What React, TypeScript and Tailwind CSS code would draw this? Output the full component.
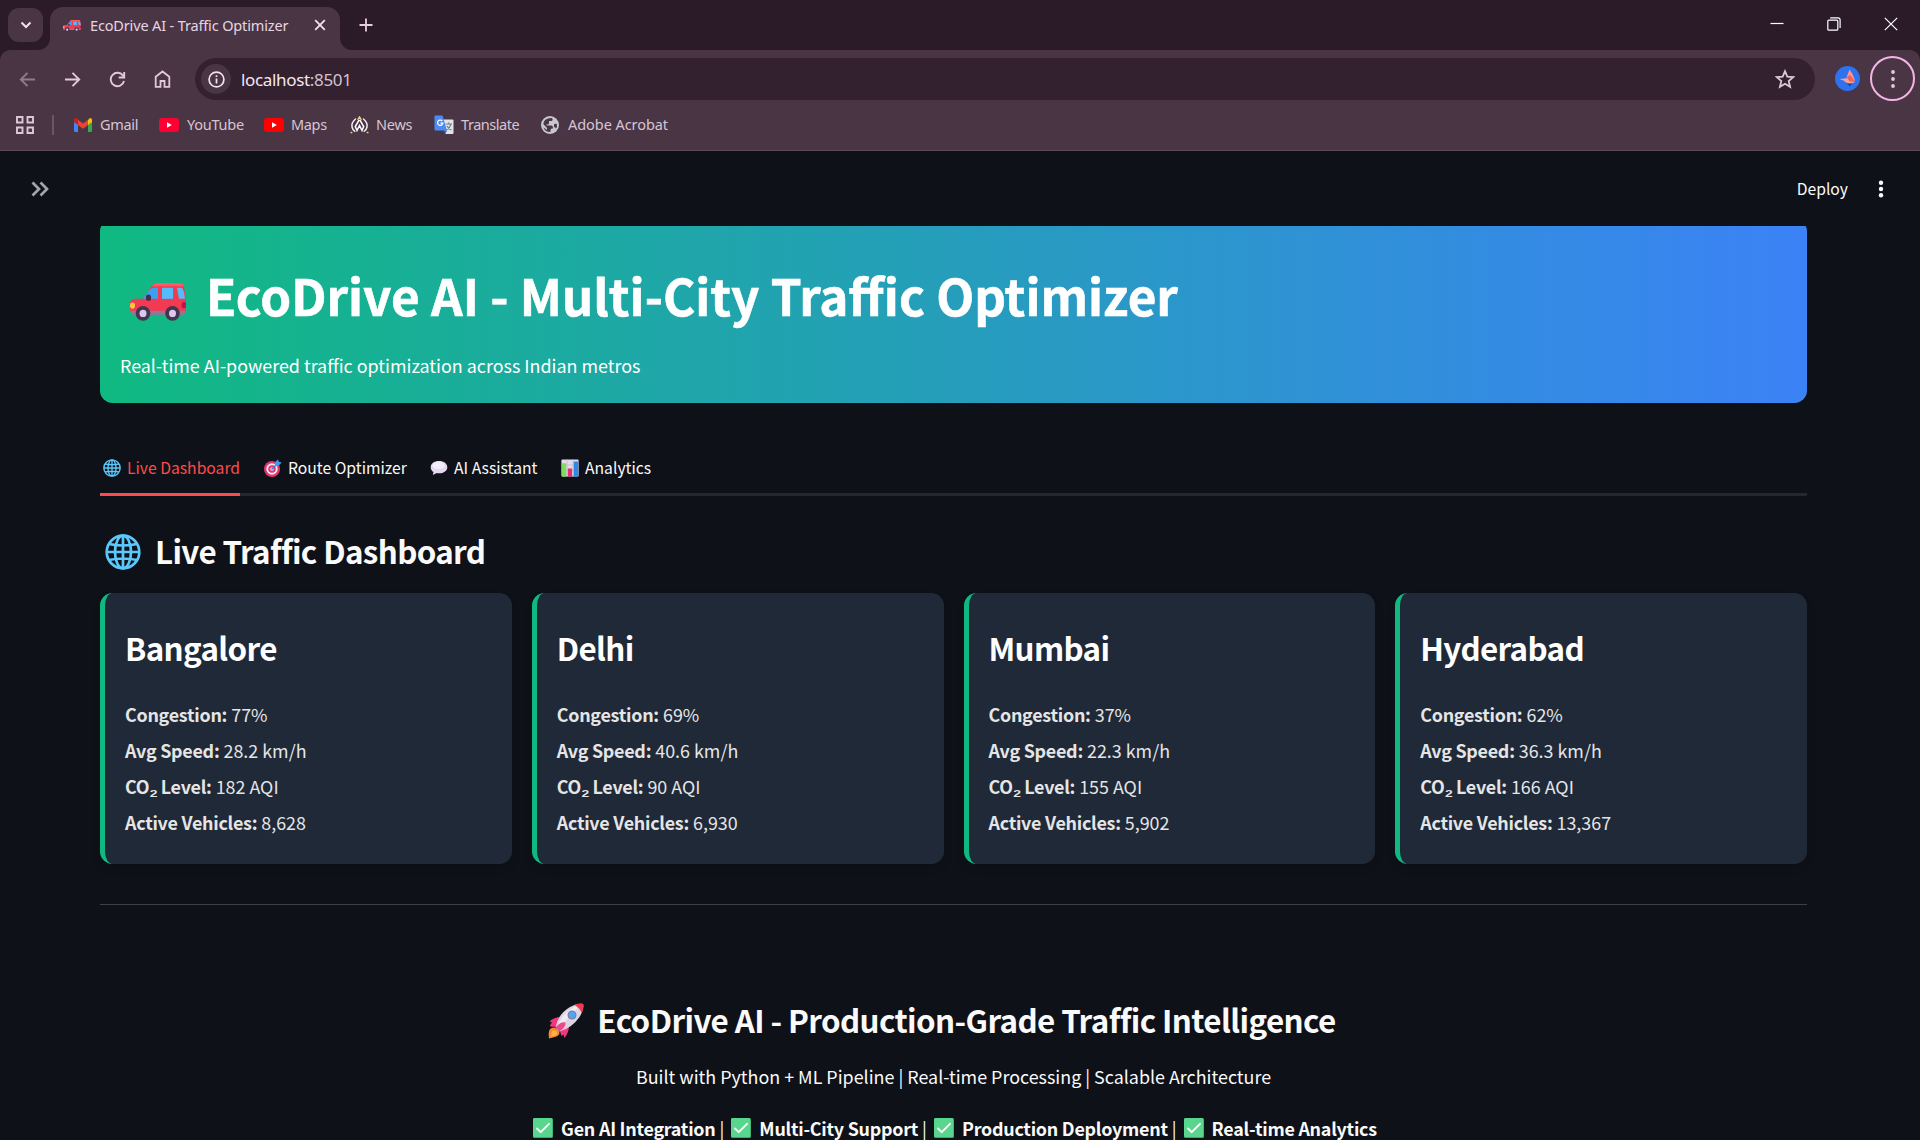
import React from "react";

const CITIES = [
  { name: "Bangalore", congestion: "77%", speed: "28.2 km/h", co2: "182 AQI", vehicles: "8,628" },
  { name: "Delhi", congestion: "69%", speed: "40.6 km/h", co2: "90 AQI", vehicles: "6,930" },
  { name: "Mumbai", congestion: "37%", speed: "22.3 km/h", co2: "155 AQI", vehicles: "5,902" },
  { name: "Hyderabad", congestion: "62%", speed: "36.3 km/h", co2: "166 AQI", vehicles: "13,367" },
];

function Car({ className }: { className?: string }) {
  return (
    <svg viewBox="0 0 56 48" preserveAspectRatio="none" className={className} fill="none">
      <path d="M13 20 22 3Q24 1 27 1H49Q53 1 54 5L56 20V36H1Q0 36 0 33V25Q0 21 5 20Z" fill="#f23a52" />
      <path d="M22 3Q24 0 27 0H49Q53 0 54 4H22Z" fill="#ff5a62" />
      <path d="M13 20 20 8Q21 6 24 6H28V20Z" fill="#3aa0f0" />
      <path d="M32 6H43V20H32Z" fill="#54bcfa" />
      <path d="M47 6H51Q53 6 54 12L55 20H49Z" fill="#54bcfa" />
      <path d="M1 35H55V38Q55 40 53 40H3Q1 40 1 38Z" fill="#9c7392" />
      <ellipse cx="2.5" cy="28.500" rx="2.500" ry="4" fill="#ffc93c" />
      <ellipse cx="54" cy="28" rx="2.500" ry="4" fill="#c3124f" />
      <ellipse cx="18.500" cy="18.500" rx="2.600" ry="4" fill="#3c2f52" />
      <ellipse cx="13" cy="38.500" rx="7.300" ry="9.300" fill="#41364d" />
      <ellipse cx="13" cy="38.500" rx="3.500" ry="4.600" fill="#dcc7ee" />
      <ellipse cx="42.500" cy="38.500" rx="7.300" ry="9.300" fill="#41364d" />
      <ellipse cx="42.500" cy="38.500" rx="3.500" ry="4.600" fill="#dcc7ee" />
    </svg>
  );
}

function GlobeEmoji({ className }: { className?: string }) {
  return (
    <svg viewBox="0 0 36 36" className={className} fill="none" stroke="#5ac8fb" strokeWidth="2.700">
      <circle cx="18" cy="18" r="16.300" />
      <ellipse cx="18" cy="18" rx="8" ry="16.300" />
      <path d="M18 1.500V34.500M1.500 18H34.500M4 10Q18 13 32 10M4 26Q18 23 32 26" />
    </svg>
  );
}

function Target({ className }: { className?: string }) {
  return (
    <svg viewBox="0 0 18 18" className={className}>
      <circle cx="8" cy="10" r="8" fill="#e1356f" />
      <circle cx="8" cy="10" r="5.700" fill="#f3e4f2" />
      <circle cx="8" cy="10" r="3.800" fill="#e1356f" />
      <circle cx="8" cy="10" r="1.800" fill="#f3e4f2" />
      <path d="M7.500 10.500 12 6" stroke="#2c7fd0" strokeWidth="1.500" />
      <path d="M11 6.800V3.500L14 .3 14.800 2.800 17.700 3.600 14.500 6.800Z" fill="#3aa0ee" />
    </svg>
  );
}

function Bubble({ className }: { className?: string }) {
  return (
    <svg viewBox="0 0 18 16" className={className}>
      <path d="M9 1C4 1 .7 3.700 .7 7.200c0 2.100 1.100 3.700 2.800 4.800L2.800 15l4-1.900c.7.100 1.400.2 2.200.2 5 0 8.300-2.600 8.300-6.100S14 1 9 1Z" fill="#e4d9ee" />
      <ellipse cx="8.500" cy="5.500" rx="6" ry="3.400" fill="#f3edf8" />
    </svg>
  );
}

function BarChart({ className }: { className?: string }) {
  return (
    <svg viewBox="0 0 18 18" className={className}>
      <rect x=".4" y=".4" width="17.200" height="17.200" rx="1" fill="#e5dcea" />
      <path d="M.4 6H17.600M.4 11.500H17.600M6 .4V17.600M12 .4V17.600" stroke="#c3b6cc" strokeWidth=".7" />
      <rect x="1" y="4.300" width="4.300" height="13.300" fill="#7ddb5e" />
      <rect x="6.800" y="9.500" width="4.300" height="8.100" fill="#e0306e" />
      <rect x="12.700" y="2.500" width="4.500" height="15.100" fill="#2f8ae6" />
    </svg>
  );
}

function Rocket({ className }: { className?: string }) {
  return (
    <svg viewBox="0 0 36 36" className={className}>
      <path d="M2 26Q6 22 11 28Q13 32 7 34L1 35.500Q0 29 2 26Z" fill="#f58a2e" />
      <path d="M4 28Q7 26 9 29Q10 32 6 33L3 33.500Z" fill="#ffb04a" />
      <path d="M13 14Q6 14 1.500 18.500L4 19.500Q2 21 2 23.500L9 24Z" fill="#f2387c" />
      <path d="M21 23Q21 29 16.500 35L15.500 31.500 13.500 33 11.500 27Z" fill="#f2387c" />
      <path d="M7.500 24.500Q10 11 22 4Q29 0 35 1Q36 7 31.500 14Q24 25 11.500 28.500Z" fill="#dcd5e4" />
      <path d="M9 25Q13 12 24 5Q29 2 33 2Q25 9 10 27Z" fill="#eee9f3" />
      <path d="M26.500 2Q31 0 34.500.8Q36 1 35.700 3Q35.500 7 33.500 10Q32 5 26.500 2Z" fill="#f03a4f" />
      <circle cx="24" cy="12" r="4.500" fill="#8b7d9b" />
      <circle cx="24" cy="12" r="3.300" fill="#4aa8f5" />
      <path d="M7.500 24.500Q13 18 17.500 19.500Q18 24 11.500 28.500Z" fill="#f0498a" />
    </svg>
  );
}

function Check({ className }: { className?: string }) {
  return (
    <svg viewBox="0 0 20 20" className={className}>
      <rect width="20" height="20" rx="1.500" fill="#3da56f" />
      <rect width="19.300" height="19" rx="1.500" fill="#58d68d" />
      <path d="M4 10.500 7.700 14.200 16 5.800" fill="none" stroke="#fff" strokeWidth="1.900" strokeLinecap="round" strokeLinejoin="round" />
    </svg>
  );
}

function YouTube({ color }: { color: string }) {
  return (
    <svg viewBox="0 0 20 14" className="h-[14px] w-5">
      <rect width="20" height="14" rx="3.200" fill={color} />
      <path d="M8 4.200V9.800L12.800 7Z" fill="#fff" />
    </svg>
  );
}

function Bookmark({ icon, label, className }: { icon: React.ReactNode; label: string; className: string }) {
  return (
    <div className={`flex shrink-0 items-center ${className}`}>
      {icon}
      <span className="mb-[2px] whitespace-nowrap">{label}</span>
    </div>
  );
}

function Browser() {
  return (
    <div className="h-[151px] bg-[#2b1b29] font-['Noto_Sans',sans-serif] text-[#e6d6e2]">
      <div className="flex h-[50px] items-start">
        <div className="mt-2 ml-2 flex h-[34px] w-[35px] items-center justify-center rounded-[11px] bg-[#4a3545]">
          <svg viewBox="0 0 12 8" className="h-2 w-3" fill="none" stroke="#efe0eb" strokeWidth="2"><path d="M1.500 1.500 6 6 10.500 1.500" /></svg>
        </div>
        <div className="relative mt-[7px] ml-[7px] flex h-[43px] w-[290px] items-center rounded-t-[13px] bg-[#4a3545] pl-[13px]">
          <svg viewBox="0 0 12 12" className="absolute bottom-0 -left-3 size-3"><path d="M12 0V12H0A12 12 0 0 0 12 0Z" fill="#4a3545" /></svg>
          <svg viewBox="0 0 12 12" className="absolute -right-3 bottom-0 size-3"><path d="M0 0V12H12A12 12 0 0 1 0 0Z" fill="#4a3545" /></svg>
          <Car className="mb-[5px] h-3 w-[18px]" />
          <span className="mb-[7px] ml-[9px] w-[198px] text-[14.500px] leading-5 tracking-[-0.150px] whitespace-nowrap">EcoDrive AI - Traffic Optimizer</span>
          <svg viewBox="0 0 12 12" className="mb-[7px] ml-[26px] size-3" stroke="#f0e4ee" strokeWidth="1.800"><path d="M1.200 1.200 10.800 10.800M10.800 1.200 1.200 10.800" /></svg>
        </div>
        <svg viewBox="0 0 14 14" className="mt-[18px] ml-[19px] size-[14px]" stroke="#e6cfe0" strokeWidth="1.800"><path d="M7 .5V13.500M.5 7H13.500" /></svg>
        <div className="mt-[17px] mr-[22px] ml-auto flex items-center gap-[43px]">
          <svg viewBox="0 0 14 14" className="size-[14px]" stroke="#fff" strokeWidth="1.200"><path d="M.5 6.500H13.500" /></svg>
          <svg viewBox="0 0 14 14" className="size-[14px]" fill="none" stroke="#fff" strokeWidth="1.200"><rect x=".8" y="3.200" width="10" height="10" rx="1" /><path d="M3.200 .9H11Q13.100 .9 13.100 3V11" /></svg>
          <svg viewBox="0 0 14 14" className="size-[14px]" stroke="#fff" strokeWidth="1.200"><path d="M.8 .8 13.200 13.200M13.200 .8 .8 13.200" /></svg>
        </div>
      </div>
      <div className="h-[101px] rounded-t-[10px] border-b border-[#5c4a57] bg-[#4a3545]">
        <div className="flex h-[58px] items-center">
          <div className="ml-[19px] flex items-center gap-[28px]">
            <svg viewBox="0 0 17 17" className="size-[17px]" fill="none" stroke="#8f7b8a" strokeWidth="1.900"><path d="M16 8.500H2M8.500 1.800 1.800 8.500 8.500 15.200" /></svg>
            <svg viewBox="0 0 17 17" className="size-[17px]" fill="none" stroke="#e2c9dc" strokeWidth="1.900"><path d="M1 8.500H15M8.500 1.800 15.200 8.500 8.500 15.200" /></svg>
            <svg viewBox="0 0 17 17" className="size-[17px]" fill="none" stroke="#e2c9dc" strokeWidth="1.900"><path d="M14.200 5A6.700 6.700 0 1 0 15 10M15.200 1V6.500H9.700" /></svg>
            <svg viewBox="0 0 17 18" className="h-[18px] w-[17px]" fill="none" stroke="#e2c9dc" strokeWidth="1.800"><path d="M1.700 6.800 8.500 1.500 15.300 6.800V16.800H10.500V11H6.500V16.800H1.700Z" /></svg>
          </div>
          <div className="ml-[24px] flex h-[42px] w-[1620px] items-center rounded-full bg-[#33212f] pr-5 pl-[6px]">
            <div className="flex size-[30px] items-center justify-center rounded-full bg-[#4a3545]">
              <svg viewBox="0 0 17 17" className="size-[17px]" fill="none" stroke="#f0e4ee" strokeWidth="1.700"><circle cx="8.500" cy="8.500" r="7.400" /><path d="M8.500 7.500V12.500M8.500 4.300V6" /></svg>
            </div>
            <span className="mt-px ml-[10px] text-[17px] leading-6 tracking-[-0.330px] text-[#f3e7f0]">localhost<span className="text-[#d3c2ce]">:8501</span></span>
            <svg viewBox="0 0 20 20" className="ml-auto size-5" fill="none" stroke="#dcc9d7" strokeWidth="1.800"><path d="M10 2.200 12.300 7.600 18.200 8.100 13.700 12 15.100 17.800 10 14.700 4.900 17.800 6.300 12 1.800 8.100 7.700 7.600Z" /></svg>
          </div>
          <svg viewBox="0 0 25 25" className="mb-px ml-5 size-[25px]"><circle cx="12.500" cy="12.500" r="12.500" fill="#2f72ee" /><path d="M15 20.500 7.500 13 18 16Z" fill="#1b3fa8" /><path d="M14.500 3.500Q18 8 19.500 13L20 15.500 13 14 11.500 11.500Z" fill="#ff9488" /><path d="M4.500 13 14 12 19.500 16.500Q14 18.500 11 16.500 9 14 4.500 13Z" fill="#f9a199" /><path d="M11.500 11.500 15 9 20 15.500 15 15.500Z" fill="#ee5f5f" /></svg>
          <div className="mb-px ml-[10px] flex size-[45px] items-center justify-center rounded-full border-2 border-[#f5b3e8]">
            <svg viewBox="0 0 4 18" className="h-[18px] w-1" fill="#e2c9dc"><circle cx="2" cy="2" r="1.900" /><circle cx="2" cy="9" r="1.900" /><circle cx="2" cy="16" r="1.900" /></svg>
          </div>
        </div>
        <div className="flex h-[34px] items-center text-[14.500px] leading-5 text-[#d6c5d2]">
          <svg viewBox="0 0 18 18" className="ml-[16px] size-[18px]" fill="none" stroke="#dcc9d7" strokeWidth="1.900"><path d="M1 1H6.500V6.500H1ZM11.500 1H17V6.500H11.500ZM1 11.500H6.500V17H1ZM11.500 11.500H17V17H11.500Z" /></svg>
          <div className="ml-[18px] h-5 w-[2px] bg-[#6b5566]" />
          <Bookmark className="ml-[20px] w-[85px] gap-2 tracking-[-0.300px]" label="Gmail" icon={
            <svg viewBox="0 0 18 14" className="h-[14px] w-[18px]"><path d="M0 2.500V12.700Q0 14 1.300 14H4V6Z" fill="#4285f4" /><path d="M18 2.500V12.700Q18 14 16.700 14H14V6Z" fill="#34a853" /><path d="M14 2V7L18 4V2Q18 0 16 0Z" fill="#fbbc04" /><path d="M0 2V4L4 7V2L2 0Q0 0 0 2Z" fill="#c5221f" /><path d="M4 1.800 9 5.600 14 1.800V7L9 10.800 4 7Z" fill="#ea4335" /><path d="M4 1.800 1.500 .1" stroke="#c5221f" /></svg>} />
          <Bookmark className="w-[105px] gap-2 tracking-[-0.250px]" label="YouTube" icon={<YouTube color="#ff0033" />} />
          <Bookmark className="w-[86px] gap-[7px] tracking-[-0.350px]" label="Maps" icon={<YouTube color="#ff0000" />} />
          <Bookmark className="w-[84px] gap-[7px] tracking-[-0.250px]" label="News" icon={
            <svg viewBox="0 0 19 18" className="h-[18px] w-[19px]" fill="none" strokeLinecap="round"><path d="M5.500 3Q1.300 6.500 2 11Q2.700 14 4.800 15.300M13.500 3Q17.700 6.500 17 11Q16.300 14 14.200 15.300" stroke="#f1ecef" strokeWidth="1.500" /><path d="M8.800 4.500 5.300 10.500 7 14.500 9.500 9.500 12 14.500 13.700 10.500 10.200 4.500" stroke="#fff" strokeWidth="1.500" /><path d="M8 3.300 9.500 1 11 3.300" stroke="#f0cf7b" strokeWidth="1.500" /><path d="M1.200 16.500H1.600M17.400 16.500H17.800" stroke="#f0cf7b" strokeWidth="1.700" /></svg>} />
          <Bookmark className="w-[107px] gap-[7px] tracking-[-0.450px]" label="Translate" icon={
            <svg viewBox="0 0 20 20" className="size-5"><path d="M8 4.500H18.500Q19.500 4.500 19.500 5.500V18Q19.500 19 18.500 19H11.500Z" fill="#e3e3e3" /><path d="M11.500 9H18M14.700 7.500V9M17 9Q16 13 12.500 15M13 11Q14.500 14 17.500 15" stroke="#68828f" fill="none" strokeWidth="1.100" /><path d="M1.500 .5H8.500L13 15.500H1.500Q.5 15.500 .5 14.500V1.500Q.5 .5 1.500 .5Z" fill="#4c8bf5" /><path d="M9 15.500H13L11.300 18.800Z" fill="#2f62c9" /><path d="M8.300 6A2.700 2.700 0 1 0 8.900 8.200H6.500" fill="none" stroke="#fff" strokeWidth="1.200" /></svg>} />
          <Bookmark className="gap-[9px] tracking-[-0.060px]" label="Adobe Acrobat" icon={
            <svg viewBox="0 0 18 18" className="size-[18px]"><circle cx="9" cy="9" r="9" fill="#c6c8cc" /><path d="M11 2Q12.500 4 10.500 5H8V7Q8 8.500 6.500 8.500H5.500V9.500H10Q12 9.500 12 11.500V12.500H11Q9.500 12.500 9.500 14V16Q4 16 2.500 11.500L6 14V12L2.300 8Q3 3 8 2.200ZM15.900 8Q16.300 11 15 12.500Q14.500 11 13 11V8.500Q13.500 7.500 15.900 8Z" fill="#4a3545" /></svg>} />
        </div>
      </div>
    </div>
  );
}

function Stat({ label, value }: { label: React.ReactNode; value: string }) {
  return (
    <div className="h-9 whitespace-nowrap">
      <span className="font-semibold tracking-[-0.260px]">{label}</span> <span>{value}</span>
    </div>
  );
}

function Feature({ label, last }: { label: string; last?: boolean }) {
  return (
    <div className="flex items-center">
      <Check className="size-5" />
      <span className="ml-2 font-semibold tracking-[-0.240px]">{label}</span>
      {!last && <span className="mr-[7px] ml-1">|</span>}
    </div>
  );
}

export default function App() {
  return (
    <div className="flex h-[1140px] w-[1920px] flex-col overflow-hidden bg-[#0e1117]">
      <Browser />
      <main className="flex flex-1 flex-col overflow-hidden font-['Noto_Sans_CJK_SC',sans-serif] text-[#fafafa]">
        <header className="flex h-[75px] shrink-0 items-center pr-[36px] pl-[31px] text-[15.700px]">
          <svg viewBox="0 0 18 16" className="h-4 w-[18px]" fill="none" stroke="#a4a5a8" strokeWidth="2.700"><path d="M1.500 1.500 8 8 1.500 14.500M9.500 1.500 16 8 9.500 14.500" /></svg>
          <span className="ml-auto">Deploy</span>
          <svg viewBox="0 0 6 18" className="ml-[30px] h-[18px] w-[6px]" fill="#fafafa"><circle cx="3" cy="2.700" r="2.200" /><circle cx="3" cy="9" r="2.200" /><circle cx="3" cy="15.300" r="2.200" /></svg>
        </header>
        <div className="flex flex-col pr-[113px] pl-[100px]">
          <div className="h-[177px] overflow-hidden">
            <div className="-mt-[7px] h-[184px] rounded-[12.500px] bg-[linear-gradient(90deg,#10b981,#3b82f6)] px-5 pt-[46px] text-white">
              <div className="flex h-[60px] items-center pl-[10px]">
                <Car className="mt-[13px] h-[38px] w-[56px]" />
                <h1 className="ml-[20px] text-[49.400px] leading-[60px] font-bold whitespace-nowrap [-webkit-text-stroke:0.6px_white]">EcoDrive AI - Multi-City Traffic Optimizer</h1>
              </div>
              <p className="mt-[25px] text-[17.900px] leading-[30px]">Real-time AI-powered traffic optimization across Indian metros</p>
            </div>
          </div>
          <nav className="mt-[40px] flex h-[53px] border-b-[3px] border-[#26282d] text-[15.700px] leading-[50px] whitespace-nowrap">
            <div className="relative mr-[24px] flex w-[140px] items-center pl-[3px] text-[#ff4b4b]">
              <GlobeEmoji className="mr-[6px] size-[18px] shrink-0" /><span>Live Dashboard</span>
              <div className="absolute -bottom-[3px] left-0 h-[3px] w-[140px] bg-[#ff4b4b]" />
            </div>
            <div className="mr-6 flex w-[142px] items-center"><Target className="mr-[6px] size-[18px] shrink-0" /><span>Route Optimizer</span></div>
            <div className="mr-[23px] flex w-[108px] items-center"><Bubble className="mr-[6px] h-4 w-[18px] shrink-0" /><span>AI Assistant</span></div>
            <div className="flex items-center"><BarChart className="mr-[6px] size-[18px] shrink-0" /><span>Analytics</span></div>
          </nav>
          <div className="mt-[33px] flex h-[44px] items-center pl-[5px]">
            <GlobeEmoji className="mt-px mr-[14px] size-9" />
            <h3 className="text-[31.350px] leading-[44px] font-semibold tracking-[-0.640px]">Live Traffic Dashboard</h3>
          </div>
          <div className="mt-[20px] grid grid-cols-4 gap-5">
            {CITIES.map((c) => (
              <div key={c.name} className="h-[271px] rounded-[12.500px] border-l-[5px] border-[#10b981] bg-[#1f2937] pt-[33px] pl-5 shadow-[0_5px_8px_rgba(0,0,0,0.1)]">
                <h3 className="text-[31.350px] leading-[44px] font-semibold tracking-[-0.640px] text-white">{c.name}</h3>
                <div className="mt-[26px] text-[17.900px] leading-9 text-[#e5e5e6]">
                  <Stat label="Congestion:" value={c.congestion} />
                  <Stat label="Avg Speed:" value={c.speed} />
                  <Stat label={<>CO<span className="align-[-2px] text-[19.500px] leading-none tracking-[-1px]">₂</span> Level:</>} value={c.co2} />
                  <Stat label="Active Vehicles:" value={c.vehicles} />
                </div>
              </div>
            ))}
          </div>
          <div className="mt-10 h-px bg-[#3d4045]" />
          <footer className="mt-[93px] flex flex-col items-center whitespace-nowrap">
            <div className="flex h-[44px] items-center pr-[23px]">
              <Rocket className="mt-px mr-[13px] size-9" />
              <h3 className="text-[31.350px] leading-[44px] font-semibold tracking-[-0.600px]">EcoDrive AI - Production-Grade Traffic Intelligence</h3>
            </div>
            <p className="mt-[19px] text-[17.900px] leading-[30px]">Built with Python + ML Pipeline | Real-time Processing | Scalable Architecture</p>
            <div className="mt-[22px] flex pl-[3px] text-[17.900px] leading-[30px]">
              <Feature label="Gen AI Integration" />
              <Feature label="Multi-City Support" />
              <Feature label="Production Deployment" />
              <Feature label="Real-time Analytics" last />
            </div>
          </footer>
        </div>
      </main>
    </div>
  );
}
